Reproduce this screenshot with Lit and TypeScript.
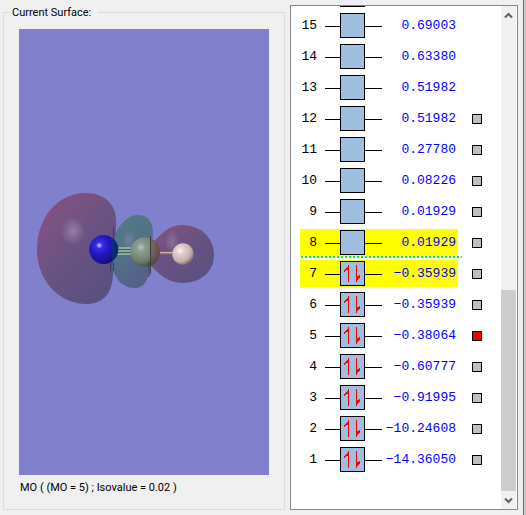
import { LitElement, html, svg, css, nothing } from "lit";
import { customElement, property, state } from "lit/decorators.js";

interface Orbital {
  index: number;
  energy: string;
  occupied?: boolean;
  highlighted?: boolean;
  hasSurface?: boolean;
}

const ORBITALS: Orbital[] = [
  { index: 15, energy: "0.69003" },
  { index: 14, energy: "0.63380" },
  { index: 13, energy: "0.51982" },
  { index: 12, energy: "0.51982", hasSurface: true },
  { index: 11, energy: "0.27780", hasSurface: true },
  { index: 10, energy: "0.08226", hasSurface: true },
  { index: 9, energy: "0.01929", hasSurface: true },
  { index: 8, energy: "0.01929", hasSurface: true, highlighted: true },
  { index: 7, energy: "−0.35939", hasSurface: true, highlighted: true, occupied: true },
  { index: 6, energy: "−0.35939", hasSurface: true, occupied: true },
  { index: 5, energy: "−0.38064", hasSurface: true, occupied: true },
  { index: 4, energy: "−0.60777", hasSurface: true, occupied: true },
  { index: 3, energy: "−0.91995", hasSurface: true, occupied: true },
  { index: 2, energy: "−10.24608", hasSurface: true, occupied: true },
  { index: 1, energy: "−14.36050", hasSurface: true, occupied: true },
];

const LUMO = 8;

@customElement("surface-view")
export class SurfaceView extends LitElement {
  static styles = css`
    :host {
      display: block;
      min-height: 0;
      background: #8080cc;
    }
    .scene {
      display: block;
      width: 100%;
      height: 100%;
    }
  `;

  render() {
    return html`
      <svg class="scene" viewBox="19 29 250 446" preserveAspectRatio="xMidYMid slice" role="img" aria-label="Molecular orbital surface">
        <defs>
          <linearGradient id="left" x1="0.1" y1="0.1" x2="0.7" y2="0.9">
            <stop offset="0" stop-color="#83527f" />
            <stop offset="0.5" stop-color="#6c5383" />
            <stop offset="1" stop-color="#5b5180" />
          </linearGradient>
          <linearGradient id="middle" x1="0.2" y1="0" x2="0.6" y2="1">
            <stop offset="0" stop-color="#527c80" />
            <stop offset="0.5" stop-color="#52708a" />
            <stop offset="1" stop-color="#555f89" />
          </linearGradient>
          <linearGradient id="right" x1="0.1" y1="0.1" x2="0.7" y2="0.9">
            <stop offset="0" stop-color="#815280" />
            <stop offset="0.5" stop-color="#695282" />
            <stop offset="1" stop-color="#5c5181" />
          </linearGradient>
          <radialGradient id="glow">
            <stop offset="0" stop-color="#a08cb4" stop-opacity="0.75" />
            <stop offset="1" stop-color="#a08cb4" stop-opacity="0" />
          </radialGradient>
          <radialGradient id="nitrogen" cx="0.35" cy="0.36" r="0.7">
            <stop offset="0" stop-color="#d0d0ff" />
            <stop offset="0.16" stop-color="#3c2ce0" />
            <stop offset="0.45" stop-color="#2218c8" />
            <stop offset="0.78" stop-color="#1c1296" />
            <stop offset="1" stop-color="#140c58" />
          </radialGradient>
          <radialGradient id="carbon" cx="0.36" cy="0.34" r="0.74">
            <stop offset="0" stop-color="#b8c6b8" />
            <stop offset="0.2" stop-color="#8a9d8c" />
            <stop offset="0.6" stop-color="#728372" />
            <stop offset="1" stop-color="#3c483e" />
          </radialGradient>
          <radialGradient id="hydrogen" cx="0.36" cy="0.34" r="0.74">
            <stop offset="0" stop-color="#fff6f4" />
            <stop offset="0.25" stop-color="#e4cece" />
            <stop offset="0.68" stop-color="#c8b0b0" />
            <stop offset="1" stop-color="#745f64" />
          </radialGradient>
          <clipPath id="carbon-side"><path d="M150 230H170V275H150Z" /></clipPath>
          <clipPath id="nitrogen-side"><path d="M112 230H125V275H112Z" /></clipPath>
        </defs>

        <path fill="url(#right)" d="M150 247C160 233 170 225 182 225C202 225 214 239 214 255C214 272 200 283 183 283C168 283 159 274 150 265Z" />
        <path fill="url(#left)" d="M86 193C104 193 116 204 116 220V233L113 272C113 294 103 304 86 304C59 304 37 280 37 250C37 217 58 193 86 193Z" />
        <path fill="url(#middle)" d="M116 233C121 222 129 215 138 215C148 215 153 222 153 234L150 264C149 280 144 288 135 288C124 288 116 281 112 268Z" />
        <ellipse cx="73" cy="231" rx="12" ry="14" fill="url(#glow)" />
        <ellipse cx="129" cy="240" rx="7" ry="10" fill="url(#glow)" opacity="0.6" />
        <ellipse cx="172" cy="242" rx="7" ry="12" fill="url(#glow)" opacity="0.7" />

        <path fill="#435e62" d="M117 247H131V255H117Z" />
        <path fill="none" stroke="#a4c8b0" stroke-width="1.3" d="M117 248H132M117 251H132M117 254H132" />
        <path fill="none" stroke="#d4b4b8" stroke-width="1.5" d="M158 252.700H174" />
        <path fill="none" stroke="#8a686f" d="M158 254H174" />

        <circle cx="103.700" cy="249.500" r="14.500" fill="url(#nitrogen)" />
        <circle cx="103.700" cy="249.500" r="14.500" fill="#003c64" opacity="0.6" clip-path="url(#nitrogen-side)" />
        <circle cx="145" cy="252" r="14.800" fill="url(#carbon)" />
        <circle cx="145" cy="252" r="14.800" fill="#7d343b" opacity="0.45" clip-path="url(#carbon-side)" />
        <circle cx="183" cy="254" r="10.700" fill="url(#hydrogen)" />
        <path fill="none" stroke="#3d3656" stroke-width="1" d="M113.500 228V237L111 240M110.500 262V271M113.500 262V271" />
        <path fill="none" stroke="#39433f" stroke-width="1" d="M150.500 236V274M149 262V277" />
      </svg>
    `;
  }
}

@customElement("orbital-row")
export class OrbitalRow extends LitElement {
  @property({ attribute: false }) orbital!: Orbital;
  @property({ type: Boolean }) selected = false;

  static styles = css`
    :host {
      display: grid;
      flex: none;
      grid-template-columns: 158px 10px;
      grid-template-rows: 27px 2px;
      column-gap: 14px;
      padding-top: 2px;
    }
    .band {
      display: grid;
      grid-template-columns: 17px 57px 1fr;
      grid-template-rows: 27px;
      column-gap: 8px;
      padding-right: 2px;
      font: 13px/27px "Liberation Mono", monospace;
      color: #000;
    }
    .highlighted {
      background: #ff0;
    }
    .index {
      text-align: right;
    }
    .level {
      display: block;
      width: 57px;
      height: 27px;
      shape-rendering: crispEdges;
    }
    .energy {
      justify-self: end;
      margin-left: -8px;
      color: #00f;
      white-space: nowrap;
    }
    .pick {
      appearance: none;
      box-sizing: border-box;
      width: 10px;
      height: 10px;
      margin: 9px 0 0;
      border: 1px solid #000;
      background: #c0c0c0;
    }
    .pick:checked {
      background: #f00;
    }
    .gap-line {
      grid-column: 1 / -1;
      grid-row: 2;
      width: 161px;
      margin-left: 1px;
      background: repeating-linear-gradient(90deg, #0f0 0 2px, #fff 2px 4px);
    }
  `;

  render() {
    const { index, energy, occupied, highlighted, hasSurface } = this.orbital;
    const id = `mo-${index}`;
    return html`
      <label class="band ${highlighted ? "highlighted" : ""}" for=${id}>
        <span class="index">${index}</span>
        <svg class="level" viewBox="0 0 57 27" aria-hidden="true">
          <path stroke="#000" d="M0 14.500H57" />
          <rect x="15.500" y="1.500" width="24" height="24" fill="#a0bee0" stroke="#000" />
          ${occupied
            ? svg`<path fill="none" stroke="#f00" d="M23.500 5V22M31.500 5V22" />
                <path fill="#f00" d="M24 5V8L22 10L19 12V10Z M31 22V19L32 18V16L35 15V17Z" />`
            : nothing}
        </svg>
        <span class="energy">${energy}</span>
      </label>
      ${hasSurface
        ? html`<input class="pick" id=${id} type="checkbox" .checked=${this.selected} />`
        : nothing}
      ${index === LUMO ? html`<span class="gap-line"></span>` : nothing}
    `;
  }
}

@customElement("app-root")
export class AppRoot extends LitElement {
  @state() private current = 5;

  static styles = css`
    :host {
      display: grid;
      grid-template-columns: minmax(0, 1fr) 228px;
      column-gap: 5px;
      box-sizing: border-box;
      height: 100vh;
      padding: 5px 6px 6px 3px;
      border-right: 2px solid #cccccc;
      background: #f0f0f0;
      box-shadow: inset -1px 0 #2a7fc8;
      font: 11px/15px Roboto, "Liberation Sans", sans-serif;
      color: #000;
    }
    .surface {
      display: flex;
      flex-direction: column;
      min-width: 0;
      margin: 0;
      padding: 9px 15px 14px;
      border: 1px solid #dcdcdc;
    }
    .title {
      margin-left: -8px;
      padding: 0 7px 0 1px;
    }
    .view {
      flex: 1;
    }
    .caption {
      margin: 0;
      padding: 5px 1px 0;
    }
    .panel {
      display: flex;
      min-height: 0;
      border: 1px solid #828790;
      background: #fff;
    }
    .levels {
      display: flex;
      flex: 1;
      flex-direction: column;
      justify-content: flex-end;
      overflow: hidden;
      padding: 0 0 34px 9px;
    }
    .next-level {
      flex: none;
      box-sizing: border-box;
      width: 25px;
      height: 25px;
      margin: 0 0 3px 40px;
      border: 1px solid #000;
      background: #a0bee0;
    }
    .scrollbar {
      display: flex;
      flex-direction: column;
      width: 15px;
      margin-right: 1px;
      background: #f0f0f0;
    }
    .step {
      display: grid;
      place-items: center;
      height: 18px;
      padding: 0;
      border: 0;
      background: none;
    }
    .chevron {
      display: block;
      width: 9px;
      height: 9px;
    }
    .track {
      display: flex;
      flex: 1;
      flex-direction: column;
      justify-content: flex-end;
    }
    .thumb {
      height: 43%;
      background: #cdcdcd;
    }
  `;

  render() {
    return html`
      <fieldset class="surface">
        <legend class="title">Current Surface:</legend>
        <surface-view class="view"></surface-view>
        <p class="caption">MO ( (MO = ${this.current}) ; Isovalue = 0.02 )</p>
      </fieldset>
      <section class="panel" aria-label="Orbital energies">
        <div class="levels">
          <div class="next-level"></div>
          ${ORBITALS.map(
            (o) => html`<orbital-row .orbital=${o} ?selected=${o.index === this.current}></orbital-row>`,
          )}
        </div>
        <div class="scrollbar">
          <button class="step" aria-label="Scroll up">
            <svg class="chevron" viewBox="0 0 9 9"><path fill="none" stroke="#606060" stroke-width="2" d="M1 6.500L4.500 3L8 6.500" /></svg>
          </button>
          <div class="track"><div class="thumb"></div></div>
          <button class="step" aria-label="Scroll down">
            <svg class="chevron" viewBox="0 0 9 9"><path fill="none" stroke="#606060" stroke-width="2" d="M1 2.500L4.500 6L8 2.500" /></svg>
          </button>
        </div>
      </section>
    `;
  }
}
